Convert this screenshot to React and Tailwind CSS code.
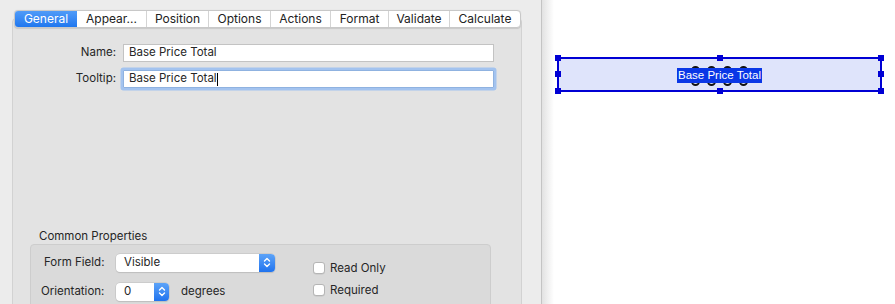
import React from "react";

const tabs = [
  { label: "General", w: "w-[62px]", active: true },
  { label: "Appear...", w: "w-[69px]" },
  { label: "Position", w: "w-[62px]" },
  { label: "Options", w: "w-[62px]" },
  { label: "Actions", w: "w-[60px]" },
  { label: "Format", w: "w-[58px]" },
  { label: "Validate", w: "w-[61px]" },
  { label: "Calculate", w: "w-[71px]" },
];

function Chevrons() {
  return (
    <svg width="8" height="11" viewBox="0 0 8 11" fill="none" stroke="white" strokeWidth="1.4" strokeLinecap="round" strokeLinejoin="round">
      <path d="M1.5 4 L4 1.5 L6.5 4" />
      <path d="M1.5 7 L4 9.5 L6.5 7" />
    </svg>
  );
}

function Checkbox({ label }) {
  return (
    <div className="flex items-center gap-[5px] leading-[14px]">
      <div className="w-[12px] h-[12px] rounded-[3px] bg-white border border-[#b5b5b5] shadow-[0_0.5px_0.5px_rgba(0,0,0,0.1)]" />
      <span>{label}</span>
    </div>
  );
}

function Handle({ className }) {
  return <div className={"absolute w-[6px] h-[6px] bg-[#0000d4] " + className} />;
}

export default function App() {
  return (
    <div
      className="w-[895px] h-[304px] flex overflow-hidden text-[11.5px] text-[#262626]"
      style={{ fontFamily: "Inter, 'Noto Sans', sans-serif" }}
    >
      {/* Left inspector pane */}
      <div className="w-[542px] shrink-0 bg-[#ececec] border-r border-[#c4c4c4] pt-[10px] pl-[12px]">
        <div className="w-[510px] h-[310px] mt-[8px] bg-[#e3e3e3] border border-[#d2d2d2] rounded-[4px] flex flex-col">
          {/* tab bar */}
          <div className="-mt-[9px] ml-[1px] flex h-[18px] w-fit bg-white border border-[#c8c8c8] rounded-[4px] shadow-[0_0.5px_1px_rgba(0,0,0,0.12)] overflow-hidden">
            {tabs.map((t, i) => (
              <div
                key={t.label}
                className={
                  "flex items-center justify-center leading-none text-[12px] " +
                  t.w +
                  (t.active
                    ? " bg-gradient-to-b from-[#4f9bf8] to-[#1f77ef] text-white"
                    : " text-[#222] " + (i > 1 ? "border-l border-[#d4d4d4]" : ""))
                }
              >
                {t.label}
              </div>
            ))}
          </div>

          {/* fields */}
          <div className="mt-[16px] flex flex-col gap-[8px]">
            <div className="flex items-center">
              <div className="w-[103px] text-right">Name:</div>
              <div className="ml-[7px] w-[371px] h-[18px] bg-white border border-[#c3c3c3] flex items-center pl-[5px]">
                Base Price Total
              </div>
            </div>
            <div className="flex items-center">
              <div className="w-[103px] text-right">Tooltip:</div>
              <div className="ml-[7px] w-[371px] h-[18px] bg-white border border-[#8fb2e0] shadow-[0_0_0_2.5px_#a3c3ef] rounded-[1px] flex items-center pl-[5px]">
                Base Price Total<span className="inline-block w-[1px] h-[13px] bg-black" />
              </div>
            </div>
          </div>

          {/* Common properties */}
          <div className="mt-[143px] ml-[26px] leading-none">Common Properties</div>
          <div className="mt-[1px] ml-[17px] w-[461px] h-[80px] bg-[#dadada] border border-[#cdcdcd] rounded-[4px] flex pt-[9px]">
            <div className="flex flex-col gap-[11px]">
              <div className="flex items-center">
                <div className="w-[85px] pl-[13px]">Form Field:</div>
                <div className="w-[159px] h-[18px] bg-white rounded-[4px] shadow-[0_0_0_0.5px_#bdbdbd,0_1px_1px_rgba(0,0,0,0.12)] flex items-center overflow-hidden">
                  <span className="flex-1 pl-[8px]">Visible</span>
                  <div className="w-[16px] h-full bg-gradient-to-b from-[#5ca3f8] to-[#1f73ee] flex items-center justify-center">
                    <Chevrons />
                  </div>
                </div>
              </div>
              <div className="flex items-center">
                <div className="w-[85px] pl-[10px]">Orientation:</div>
                <div className="w-[53px] h-[18px] bg-white rounded-[4px] shadow-[0_0_0_0.5px_#bdbdbd,0_1px_1px_rgba(0,0,0,0.12)] flex items-center overflow-hidden">
                  <span className="flex-1 pl-[8px]">0</span>
                  <div className="w-[15px] h-full bg-gradient-to-b from-[#5ca3f8] to-[#1f73ee] flex items-center justify-center">
                    <Chevrons />
                  </div>
                </div>
                <span className="ml-[12px]">degrees</span>
              </div>
            </div>
            <div className="ml-[38px] mt-[7px] flex flex-col gap-[8px]">
              <Checkbox label="Read Only" />
              <Checkbox label="Required" />
            </div>
          </div>
        </div>
      </div>

      {/* Right canvas */}
      <div className="flex-1 bg-white relative">
        <div className="absolute left-0 top-0 bottom-0 w-[12px] bg-gradient-to-r from-[#e2e2e2] to-white" />
        <div className="relative ml-[15px] mt-[57px] w-[325px] h-[35px] bg-[#dfe4fb] border-2 border-[#0000d4] flex items-center justify-center">
          <Handle className="-left-[4px] -top-[4px]" />
          <Handle className="left-[158px] -top-[4px]" />
          <Handle className="-right-[4px] -top-[4px]" />
          <Handle className="-left-[4px] top-[12px]" />
          <Handle className="-right-[4px] top-[12px]" />
          <Handle className="-left-[4px] -bottom-[4px]" />
          <Handle className="left-[158px] -bottom-[4px]" />
          <Handle className="-right-[4px] -bottom-[4px]" />
          <div className="relative mt-[2px]">
            <div className="absolute inset-0 flex items-center justify-around px-[10px]">
              <div className="w-[9px] h-[20px] rounded-full border-[2.5px] border-[#111]" />
              <div className="w-[9px] h-[20px] rounded-full border-[2.5px] border-[#111]" />
              <div className="w-[9px] h-[20px] rounded-full border-[2.5px] border-[#111]" />
              <div className="w-[9px] h-[20px] rounded-full border-[2.5px] border-[#111]" />
            </div>
            <span
              className="relative block bg-[#0a37e6] text-white text-[11.5px] leading-[15px] px-[1px]"
              style={{ fontFamily: "'Liberation Sans', Arial, sans-serif" }}
            >
              Base Price Total
            </span>
          </div>
        </div>
      </div>
    </div>
  );
}
